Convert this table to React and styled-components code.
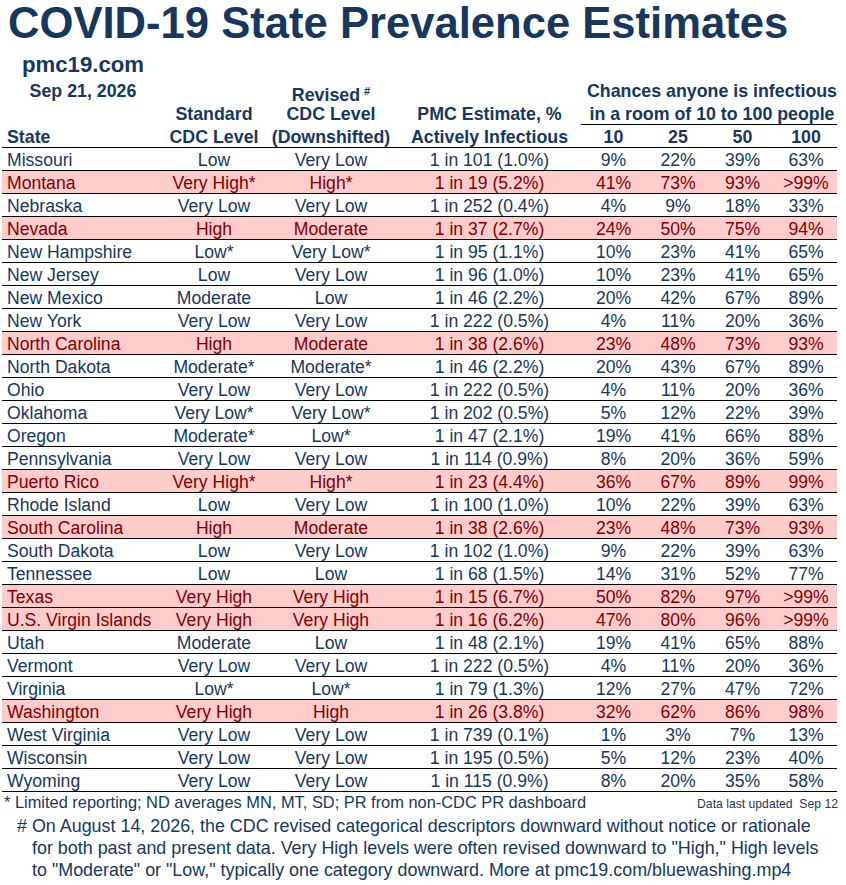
import React from 'react'
import styled, { createGlobalStyle, css } from 'styled-components'

const navy = '#17375e'
const cols = '156px 112px 122px 189px 65px 64px 65px 62px'

const GlobalStyle = createGlobalStyle`
  html, body {
    margin: 0;
    padding: 0;
    background: #fff;
  }
  body {
    font-family: "Liberation Sans", Arial, sans-serif;
    color: ${navy};
  }
`

const Page = styled.div`
  width: 846px;
  height: 885px;
  box-sizing: border-box;
  padding: 0 0 0 2px;
  overflow: hidden;
`

const Title = styled.h1`
  margin: 0 0 0 6px;
  font-size: 43.6px;
  line-height: 46px;
  font-weight: 700;
  white-space: nowrap;
`

const HeadGrid = styled.div`
  display: grid;
  width: 835px;
  grid-template-columns: ${cols};
  grid-template-rows: 31px 23px 23px 24px;
  border-bottom: 1px solid #000;
  box-sizing: border-box;
`

const HeadCell = styled.div`
  grid-column: ${p => p.$col} / span ${p => p.$span || 1};
  grid-row: ${p => p.$row};
  box-sizing: border-box;
  padding-top: 5px;
  font-size: 17.8px;
  line-height: 18px;
  font-weight: 700;
  white-space: nowrap;
  text-align: ${p => p.$align || 'center'};
  ${p => p.$align === 'left' && css`padding-left: 5px;`}
  ${p => p.$under && css`
    height: 25px;
    border-bottom: 1px solid #000;
  `}
  ${p => p.$shift && css`padding-left: ${p.$shift}px;`}
`

const Site = styled(HeadCell)`
  font-size: 22.2px;
  line-height: 24px;
  padding-top: 7px;
  padding-left: 6px;
`

const Sup = styled.span`
  font-size: 11px;
  vertical-align: 6px;
  margin-left: 4px;
`

const Row = styled.div`
  display: grid;
  width: 835px;
  grid-template-columns: ${cols};
  height: 23px;
  box-sizing: border-box;
  border-bottom: 1px solid #000;
  background: ${p => (p.$hot ? '#ffcccc' : '#fff')};
  color: ${p => (p.$hot ? '#800000' : navy)};
`

const Cell = styled.div`
  padding-top: 3px;
  font-size: 17.6px;
  line-height: 19px;
  white-space: nowrap;
  text-align: ${p => p.$align || 'center'};
  ${p => p.$align === 'left' && css`padding-left: 5px;`}
  ${p => p.$shift && css`padding-left: ${p.$shift}px;`}
`

const NoteLine = styled.div`
  display: flex;
  justify-content: space-between;
  align-items: baseline;
  width: 836px;
  margin-top: 1px;
  padding-left: 2px;
  box-sizing: border-box;
  font-size: 16.4px;
  line-height: 18px;
  white-space: nowrap;
`

const Updated = styled.span`
  font-size: 12.2px;
`

const Revision = styled.p`
  margin: 2px 0 0 0;
  padding-left: 30px;
  text-indent: -15px;
  font-size: 17.9px;
  line-height: 22px;
  white-space: nowrap;
`

const data = [
  ['Missouri', 'Low', 'Very Low', '1 in 101 (1.0%)', '9%', '22%', '39%', '63%'],
  ['Montana', 'Very High*', 'High*', '1 in 19 (5.2%)', '41%', '73%', '93%', '>99%', true],
  ['Nebraska', 'Very Low', 'Very Low', '1 in 252 (0.4%)', '4%', '9%', '18%', '33%'],
  ['Nevada', 'High', 'Moderate', '1 in 37 (2.7%)', '24%', '50%', '75%', '94%', true],
  ['New Hampshire', 'Low*', 'Very Low*', '1 in 95 (1.1%)', '10%', '23%', '41%', '65%'],
  ['New Jersey', 'Low', 'Very Low', '1 in 96 (1.0%)', '10%', '23%', '41%', '65%'],
  ['New Mexico', 'Moderate', 'Low', '1 in 46 (2.2%)', '20%', '42%', '67%', '89%'],
  ['New York', 'Very Low', 'Very Low', '1 in 222 (0.5%)', '4%', '11%', '20%', '36%'],
  ['North Carolina', 'High', 'Moderate', '1 in 38 (2.6%)', '23%', '48%', '73%', '93%', true],
  ['North Dakota', 'Moderate*', 'Moderate*', '1 in 46 (2.2%)', '20%', '43%', '67%', '89%'],
  ['Ohio', 'Very Low', 'Very Low', '1 in 222 (0.5%)', '4%', '11%', '20%', '36%'],
  ['Oklahoma', 'Very Low*', 'Very Low*', '1 in 202 (0.5%)', '5%', '12%', '22%', '39%'],
  ['Oregon', 'Moderate*', 'Low*', '1 in 47 (2.1%)', '19%', '41%', '66%', '88%'],
  ['Pennsylvania', 'Very Low', 'Very Low', '1 in 114 (0.9%)', '8%', '20%', '36%', '59%'],
  ['Puerto Rico', 'Very High*', 'High*', '1 in 23 (4.4%)', '36%', '67%', '89%', '99%', true],
  ['Rhode Island', 'Low', 'Very Low', '1 in 100 (1.0%)', '10%', '22%', '39%', '63%'],
  ['South Carolina', 'High', 'Moderate', '1 in 38 (2.6%)', '23%', '48%', '73%', '93%', true],
  ['South Dakota', 'Low', 'Very Low', '1 in 102 (1.0%)', '9%', '22%', '39%', '63%'],
  ['Tennessee', 'Low', 'Low', '1 in 68 (1.5%)', '14%', '31%', '52%', '77%'],
  ['Texas', 'Very High', 'Very High', '1 in 15 (6.7%)', '50%', '82%', '97%', '>99%', true],
  ['U.S. Virgin Islands', 'Very High', 'Very High', '1 in 16 (6.2%)', '47%', '80%', '96%', '>99%', true],
  ['Utah', 'Moderate', 'Low', '1 in 48 (2.1%)', '19%', '41%', '65%', '88%'],
  ['Vermont', 'Very Low', 'Very Low', '1 in 222 (0.5%)', '4%', '11%', '20%', '36%'],
  ['Virginia', 'Low*', 'Low*', '1 in 79 (1.3%)', '12%', '27%', '47%', '72%'],
  ['Washington', 'Very High', 'High', '1 in 26 (3.8%)', '32%', '62%', '86%', '98%', true],
  ['West Virginia', 'Very Low', 'Very Low', '1 in 739 (0.1%)', '1%', '3%', '7%', '13%'],
  ['Wisconsin', 'Very Low', 'Very Low', '1 in 195 (0.5%)', '5%', '12%', '23%', '40%'],
  ['Wyoming', 'Very Low', 'Very Low', '1 in 115 (0.9%)', '8%', '20%', '35%', '58%'],
]

function Header () {
  return (
    <HeadGrid>
      <Site $col={1} $row={1}>pmc19.com</Site>
      <HeadCell $col={1} $row={2} $shift={6}>Sep 21, 2026</HeadCell>
      <HeadCell $col={3} $row={2}>Revised<Sup>#</Sup></HeadCell>
      <HeadCell $col={5} $row={2} $span={4} $shift={6}>Chances anyone is infectious</HeadCell>
      <HeadCell $col={2} $row={3}>Standard</HeadCell>
      <HeadCell $col={3} $row={3}>CDC Level</HeadCell>
      <HeadCell $col={4} $row={3} $shift={6}>PMC Estimate, %</HeadCell>
      <HeadCell $col={5} $row={3} $span={4} $under $shift={6}>in a room of 10 to 100 people</HeadCell>
      <HeadCell $col={1} $row={4} $align='left'>State</HeadCell>
      <HeadCell $col={2} $row={4}>CDC Level</HeadCell>
      <HeadCell $col={3} $row={4}>(Downshifted)</HeadCell>
      <HeadCell $col={4} $row={4} $shift={6}>Actively Infectious</HeadCell>
      <HeadCell $col={5} $row={4}>10</HeadCell>
      <HeadCell $col={6} $row={4}>25</HeadCell>
      <HeadCell $col={7} $row={4}>50</HeadCell>
      <HeadCell $col={8} $row={4}>100</HeadCell>
    </HeadGrid>
  )
}

export default function App () {
  return (
    <Page>
      <GlobalStyle />
      <Title>COVID-19 State Prevalence Estimates</Title>
      <Header />
      {data.map(([state, std, rev, est, a, b, c, d, hot]) => (
        <Row key={state} $hot={hot}>
          <Cell $align='left'>{state}</Cell>
          <Cell>{std}</Cell>
          <Cell>{rev}</Cell>
          <Cell $shift={6}>{est}</Cell>
          <Cell>{a}</Cell>
          <Cell>{b}</Cell>
          <Cell>{c}</Cell>
          <Cell>{d}</Cell>
        </Row>
      ))}
      <NoteLine>
        <span>* Limited reporting; ND averages MN, MT, SD; PR from non-CDC PR dashboard</span>
        <Updated>Data last updated&nbsp; Sep 12</Updated>
      </NoteLine>
      <Revision>
        # On August 14, 2026, the CDC revised categorical descriptors downward without notice or rationale<br />
        for both past and present data. Very High levels were often revised downward to "High," High levels<br />
        to "Moderate" or "Low," typically one category downward. More at pmc19.com/bluewashing.mp4
      </Revision>
    </Page>
  )
}
